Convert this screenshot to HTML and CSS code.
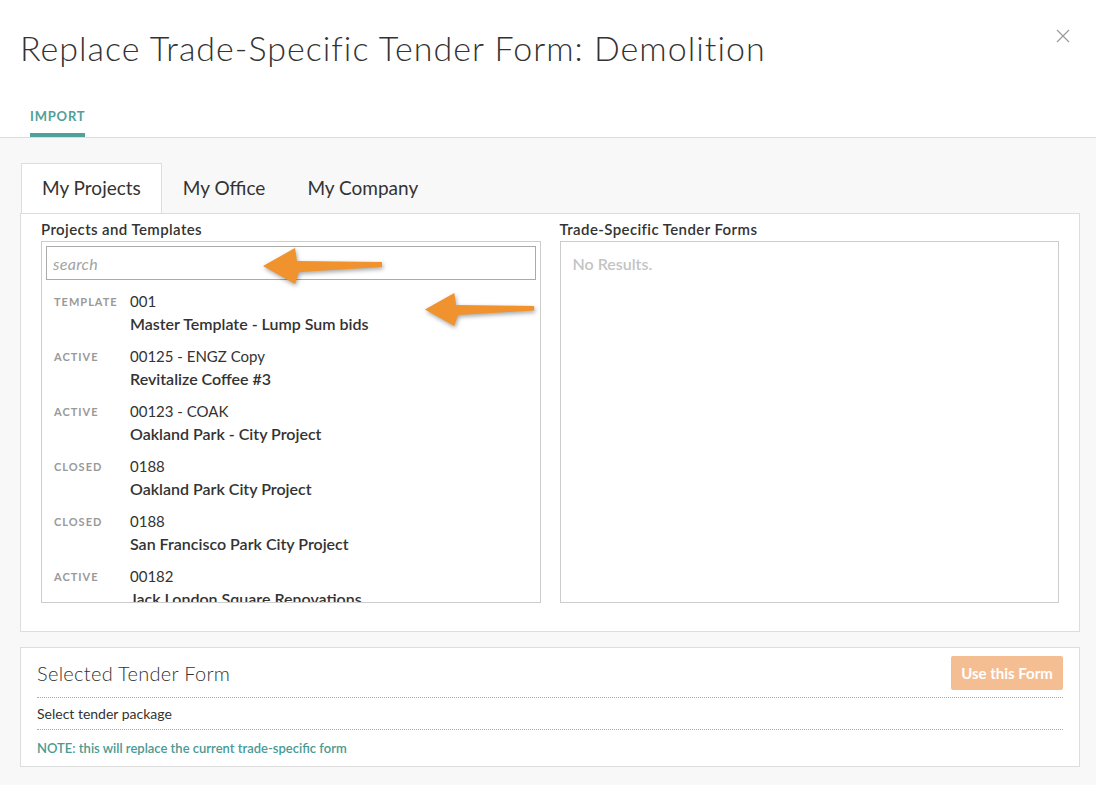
FILE: index.html
```html
<!DOCTYPE html>
<html>
<head>
  <meta charset="UTF-8">
  <title>Replace Trade-Specific Tender Form</title>
  <link rel="stylesheet" href="styles.css">
</head>
<body>
  <div class="modal">
    <div class="modal-head">
      <h1>Replace Trade-Specific Tender Form: Demolition</h1>
      <svg class="close" width="14" height="14" viewBox="0 0 14 14"><path d="M1 1L13 13M13 1L1 13" stroke="#9a9a9a" stroke-width="1.2" fill="none"/></svg>
      <div class="head-tabs">
        <span class="head-tab">IMPORT</span>
      </div>
    </div>

    <div class="modal-body">
      <div class="tabs">
        <div class="tab active">My Projects</div>
        <div class="tab">My Office</div>
        <div class="tab">My Company</div>
      </div>

      <div class="panel">
        <div class="col">
          <div class="col-label">Projects and Templates</div>
          <div class="box list-box">
            <div class="search-wrap">
              <input class="search" placeholder="search" />
            </div>
            <div class="item">
              <div class="status">TEMPLATE</div>
              <div><div class="num">001</div><div class="name">Master Template - Lump Sum bids</div></div>
            </div>
            <div class="item">
              <div class="status">ACTIVE</div>
              <div><div class="num">00125 - ENGZ Copy</div><div class="name">Revitalize Coffee #3</div></div>
            </div>
            <div class="item">
              <div class="status">ACTIVE</div>
              <div><div class="num">00123 - COAK</div><div class="name">Oakland Park - City Project</div></div>
            </div>
            <div class="item">
              <div class="status">CLOSED</div>
              <div><div class="num">0188</div><div class="name">Oakland Park City Project</div></div>
            </div>
            <div class="item">
              <div class="status">CLOSED</div>
              <div><div class="num">0188</div><div class="name">San Francisco Park City Project</div></div>
            </div>
            <div class="item">
              <div class="status">ACTIVE</div>
              <div><div class="num">00182</div><div class="name">Jack London Square Renovations</div></div>
            </div>
            <svg class="arrow arrow-search" width="122" height="40" viewBox="0 0 122 40"><path d="M1 19L33 1L35 14L120 15L120 20L37 25L33 37Z" fill="#f0922e"/></svg>
            <svg class="arrow arrow-item" width="112" height="37" viewBox="0 0 122 40"><path d="M1 19L33 1L35 14L120 15L120 20L37 25L33 37Z" fill="#f0922e"/></svg>
          </div>
        </div>
        <div class="col">
          <div class="col-label">Trade-Specific Tender Forms</div>
          <div class="box">
            <div class="empty">No Results.</div>
          </div>
        </div>
      </div>

      <div class="selected">
        <div class="selected-head">
          <span class="selected-title">Selected Tender Form</span>
          <button class="use-btn">Use this Form</button>
        </div>
        <div class="selected-row">Select tender package</div>
        <div class="note">NOTE: this will replace the current trade-specific form</div>
      </div>
    </div>
  </div>
</body>
</html>
```

FILE: styles.css
```css
body { margin: 0; font-family: Lato, "Open Sans", sans-serif; color: #333; background: #f8f8f8; }
.modal { width: 1096px; min-height: 785px; }
.modal-head { background: #fff; border-bottom: 1px solid #ddd; position: relative; padding: 0 20px; }
.modal-head h1 { margin: 0; padding-top: 26px; font-weight: 300; font-size: 34px; line-height: 44px; color: #333; letter-spacing: 1px; }
.close { position: absolute; right: 26px; top: 29px; }
.head-tabs { padding-left: 10px; margin-top: 38px; display: flex; }
.head-tab { font-size: 13px; font-weight: 700; color: #52a09a; letter-spacing: 0.8px; padding-bottom: 9px; border-bottom: 4px solid #52a09a; line-height: 16px; }

.modal-body { padding: 24px 16px 19px 20px; }
.tabs { display: flex; padding-left: 1px; }
.tab { font-size: 19px; padding: 0 20px 0 20px; height: 50px; line-height: 50px; color: #333; border: 1px solid transparent; border-bottom: none; position: relative; }
.tab.active { background: #fff; border-color: #ddd; top: 1px; height: 49px; line-height: 48px; }

.panel { background: #fff; border: 1px solid #ddd; padding: 5px 20px 28px 20px; display: flex; gap: 19px; }
.col { flex: 1; }
.col-label { font-size: 15px; font-weight: 600; color: #333; line-height: 20px; margin-bottom: 2px; letter-spacing: 0.4px; }
.box { border: 1px solid #ccc; height: 360px; position: relative; overflow: hidden; }
.search-wrap { padding: 4px 4px 0 4px; }
.search { width: 100%; box-sizing: border-box; height: 34px; border: 1px solid #aaa; font-family: inherit; font-size: 16px; letter-spacing: 0.3px; padding: 0 6px; outline: none; }
.search::placeholder { font-style: italic; color: #a3a3a3; }
.item { display: flex; padding-left: 12px; margin-top: 10px; }
.item:first-of-type { margin-top: 10px; }
.status { width: 76px; flex: none; font-size: 11px; font-weight: 700; color: #999; letter-spacing: 1px; line-height: 23px; }
.num { font-size: 15px; line-height: 22px; color: #333; }
.name { font-size: 16px; font-weight: 600; line-height: 23px; color: #333; }
.empty { padding: 12px 12px; font-size: 16px; font-weight: 600; color: #c4c4c4; }
.arrow { position: absolute; filter: drop-shadow(1px 2px 2px rgba(0,0,0,0.35)); }
.arrow-search { left: 220px; top: 5px; }
.arrow-item { left: 382px; top: 50px; }

.selected { margin-top: 15px; background: #fff; border: 1px solid #ddd; padding: 8px 16px 0 16px; }
.selected-head { display: flex; justify-content: space-between; align-items: center; padding-bottom: 7px; border-bottom: 1px dotted #aaa; }
.selected-title { font-size: 20px; font-weight: 300; color: #333; letter-spacing: 0.3px; }
.use-btn { background: #f5be92; color: #fff; border: none; border-radius: 2px; font-family: inherit; font-size: 15px; font-weight: 700; width: 112px; height: 34px; }
.selected-row { font-size: 14px; line-height: 31px; border-bottom: 1px dotted #aaa; }
.note { font-size: 13px; color: #4a9a93; line-height: 36px; font-weight: 600; }
```
